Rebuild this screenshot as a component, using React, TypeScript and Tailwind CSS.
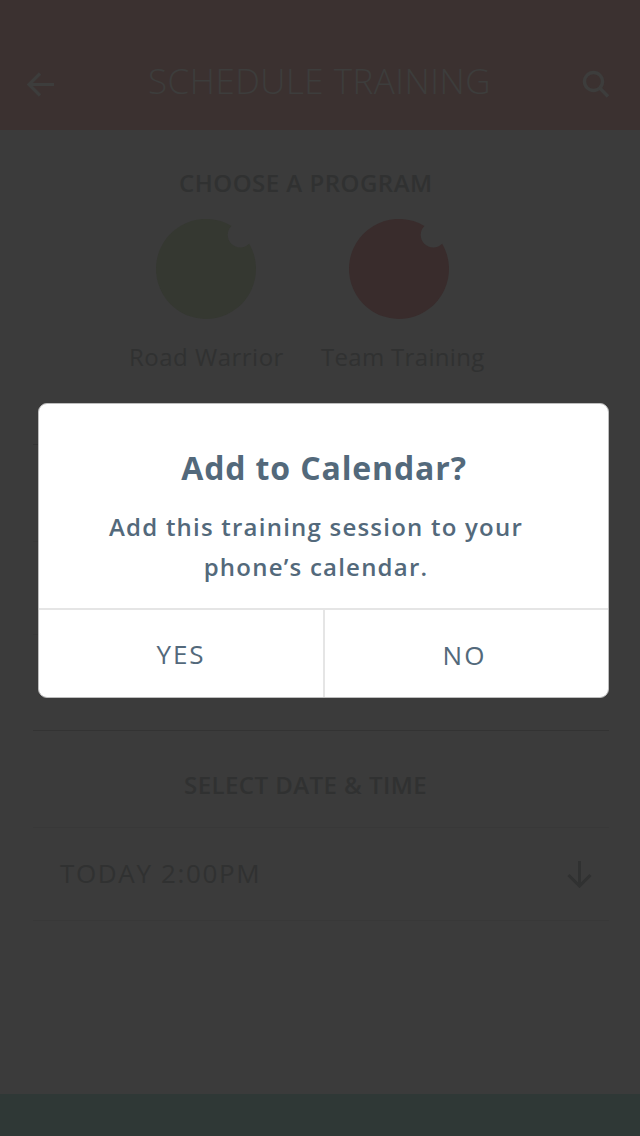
function ProgramIcon({ color }: { color: string }) {
  return (
    <svg width="100" height="100" viewBox="0 0 100 100">
      <path d="M75.4 6.9A50 50 0 1 0 93.2 24.8 12.3 12.3 0 0 1 75.4 6.9Z" fill={color} />
    </svg>
  );
}

export default function App() {
  return (
    <div className="relative h-[1136px] w-[640px] overflow-hidden bg-[#3b3b3b] font-['Open_Sans',sans-serif] text-[#303131]">
      <div className="flex h-full flex-col">
        <header className="flex h-[130px] items-start justify-between bg-[#3b3130] pl-[27px] pr-[30px] pt-[70px] text-[#3d3d3c]">
          <svg width="28" height="28" viewBox="0 0 28 28" fill="none" stroke="currentColor" strokeWidth="3.2"><path d="M13 3.5 2 14.5l11 11M2 14.5h25" /></svg>
          <h1 className="-mt-[13px] ml-[2px] whitespace-nowrap text-[35px] leading-[48px] font-light tracking-[0.45px]">SCHEDULE TRAINING</h1>
          <svg width="28" height="28" viewBox="0 0 28 28" fill="none" stroke="currentColor" strokeWidth="3.4"><circle cx="11.5" cy="11.5" r="9" /><path d="m17.5 17.8 8.5 8.7" /></svg>
        </header>
        <section className="h-[314px]">
          <h2 className="ml-[179px] mt-[37px] text-[24px] leading-[32px] font-semibold tracking-[0.5px]">CHOOSE A PROGRAM</h2>
          <div className="mt-[20px] flex gap-[37px] pl-[129px]">
            <div className="flex w-[155px] flex-col items-start gap-[22px]">
              <div className="ml-[27px]"><ProgramIcon color="#353831" /></div>
              <p className="whitespace-nowrap text-[24px] leading-[32px] tracking-[0.5px]">Road Warrior</p>
            </div>
            <div className="flex w-[163px] flex-col items-start gap-[22px]">
              <div className="ml-[28px]"><ProgramIcon color="#392c2c" /></div>
              <p className="whitespace-nowrap text-[24px] leading-[32px] tracking-[0.32px]">Team Training</p>
            </div>
          </div>
        </section>
        <div className="ml-[33px] mr-[31px] h-[97px] border-t border-[#343434]" />
        <div className="ml-[33px] mr-[31px] h-[93px] border-t border-[#383838]" />
        <div className="ml-[33px] mr-[31px] h-[97px] border-y border-t-[#383838] border-b-[#333333]" />
        <section className="flex-1">
          <h2 className="ml-[184px] mt-[38px] text-[24px] leading-[32px] font-semibold tracking-[0.45px]">SELECT DATE &amp; TIME</h2>
          <div className="ml-[33px] mr-[31px] mt-[26px] flex h-[94px] items-center justify-between border-y border-[#383838] pl-[27px] pr-[16px]">
            <span className="pb-[2px] whitespace-nowrap text-[26px] leading-[36px] tracking-[1.65px]">TODAY 2:00PM</span>
            <svg width="26" height="28" viewBox="0 0 26 28" fill="none" stroke="currentColor" strokeWidth="3"><path d="M12.5 1v25M1.5 15l11 11 11-11" /></svg>
          </div>
        </section>
        <footer className="h-[42px] bg-[#2f3836]" />
      </div>
      <div role="dialog" className="absolute left-[38px] top-[403px] flex h-[295px] w-[571px] flex-col overflow-hidden rounded-[9px] border border-[#bdbdbd] bg-white text-[#53697b]">
        <div className="h-[204px] pt-[42px] text-center">
          <h2 className="pl-[1px] text-[32px] leading-[44px] font-bold tracking-[0.87px]">Add to Calendar?</h2>
          <p className="mt-[17px] pr-[15px] text-[24px] leading-[40px] font-semibold tracking-[1.22px]">Add this training session to your<br />phone’s calendar.</p>
        </div>
        <div className="flex flex-1 border-t-2 border-[#e5e5e5] text-[26px] leading-[36px] tracking-[2px]">
          <button className="w-[286px] border-r-2 border-[#e5e5e5]">YES</button>
          <button className="flex-1 pr-[4px] pt-[2px]">NO</button>
        </div>
      </div>
    </div>
  );
}
